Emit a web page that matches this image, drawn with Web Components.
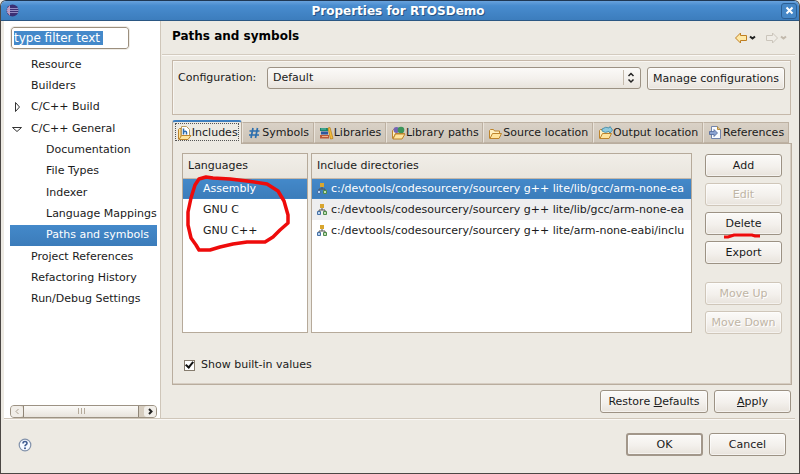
<!DOCTYPE html>
<html lang="en">
<head>
<meta charset="utf-8">
<title>Properties for RTOSDemo</title>
<style>
  html, body { margin: 0; min-height: 100%; }
  body {
    --face: #edeae3;
    --line: #c5b8a9;
    --edge: #9c9284;
    --dim: #bfb5a5;
    --blue: linear-gradient(#4489ca, #3b7cba);
    font: 11px/14px "DejaVu Sans", sans-serif;
    color: #1a1a1a;
    background: var(--face);
  }
</style>
</head>
<body>

<properties-dialog heading="Properties for RTOSDemo">
  <settings-nav slot="nav">
    <tree-item>Resource</tree-item>
    <tree-item>Builders</tree-item>
    <tree-item state="closed">C/C++ Build</tree-item>
    <tree-item state="open">C/C++ General</tree-item>
    <tree-item nested>Documentation</tree-item>
    <tree-item nested>File Types</tree-item>
    <tree-item nested>Indexer</tree-item>
    <tree-item nested>Language Mappings</tree-item>
    <tree-item nested selected>Paths and symbols</tree-item>
    <tree-item>Project References</tree-item>
    <tree-item>Refactoring History</tree-item>
    <tree-item>Run/Debug Settings</tree-item>
  </settings-nav>

  <page-header>Paths and symbols</page-header>
  <config-picker></config-picker>
  <tab-strip>
    <tab-item icon="includes" selected>Includes</tab-item>
    <tab-item icon="symbols">Symbols</tab-item>
    <tab-item icon="libraries">Libraries</tab-item>
    <tab-item icon="libpaths">Library paths</tab-item>
    <tab-item icon="source">Source location</tab-item>
    <tab-item icon="output">Output location</tab-item>
    <tab-item icon="references">References</tab-item>
  </tab-strip>
  <includes-panel>
    <push-button slot="actions">Add</push-button>
    <push-button slot="actions" disabled>Edit</push-button>
    <push-button slot="actions" marked>Delete</push-button>
    <push-button slot="actions" last>Export</push-button>
    <push-button slot="actions" disabled>Move Up</push-button>
    <push-button slot="actions" disabled>Move Down</push-button>
  </includes-panel>

  <push-button slot="page-actions" wide>Restore <u>D</u>efaults</push-button>
  <push-button slot="page-actions"><u>A</u>pply</push-button>
  <push-button slot="footer" primary>OK</push-button>
  <push-button slot="footer">Cancel</push-button>
</properties-dialog>

<script>
const FOLDER = `
  <path d="M1.500 13.500v-8l1-1h3l1 1.500h5v2" fill="#fff0bf" stroke="#bd842c"/>
  <path d="M2 13.500 4.500 8.500h9l-2.500 5z" fill="#ffe49c" stroke="#bd842c"/>`;

const ICONS = {
  includes: `
    <path d="M1.500 14V4.500l1-1H4V14z" fill="#ffe49c" stroke="#bd842c"/>
    <path d="M4.500 1.500h5l3 3v6h-8z" fill="#fff" stroke="#b99b60"/>
    <path d="M6.500 3.500v6M6.500 7q3-1.500 3 .500v2" fill="none" stroke="#2d6bad" stroke-width="1.500"/>
    <path d="M2 14.500 4.500 10.500h9.500l-3 4z" fill="#ffe49c" stroke="#bd842c"/>`,
  symbols: `<path d="M6 3 4 13M10.500 3l-2 10M2.500 6h10M2 10h10" stroke="#2d6fae" stroke-width="1.700"/>`,
  libraries: `
    <path d="M1 3h8v3H1z" fill="#19866f"/><path d="M2 4h5" stroke="#69c0aa"/>
    <path d="M2 6.500h7v3H2z" fill="#2f579f"/>
    <path d="M1 10h9v3.500H1z" fill="#bd5937"/><path d="M3 11.500h6" stroke="#efb48c"/>
    <path d="m9 3 2-.500 3 11-2.500.500z" fill="#f4bd3b" stroke="#b67b17" stroke-width=".7"/>`,
  libpaths: FOLDER + `
    <circle cx="5.500" cy="5" r="3" fill="#7565b5"/>
    <circle cx="10" cy="5" r="3.300" fill="#3d955b"/>
    <path d="M2 14 4.500 9h9.500l-3 5z" fill="#ffe49c" stroke="#bd842c"/>`,
  source: FOLDER,
  output: FOLDER + `
    <path d="M4 4q4-3 7-1l1-1.500L14.500 5 12 8l-1-1.500q-4 2-7-.500z" fill="#8fc9dc" stroke="#3b84a2" stroke-width=".8"/>`,
  references: `
    <path d="M3.500 1.500h6l3 3v9h-9z" fill="#f9fbff" stroke="#7184ad"/>
    <path d="M9.500 1.500v3h3" fill="#f0c56c" stroke="#b68c3d"/>
    <path d="M1.500 6.500H6V4.500L9.500 8 6 11.500v-2H1.500z" fill="#8ba3d2" stroke="#4c6699" stroke-width=".8"/>`,
};

/**
 * Attaches an open shadow root with the given markup.
 * @param {HTMLElement} host
 * @param {string} html
 * @returns {ShadowRoot}
 */
function render(host, html) {
  const template = document.createElement("template");
  template.innerHTML = `<style>:host, * { box-sizing: border-box; }</style>${html}`;
  const root = host.attachShadow({ mode: "open" });
  root.append(template.content.cloneNode(true));
  return root;
}

/** Push button, optionally disabled, default or underlined in red. */
class PushButton extends HTMLElement {
  connectedCallback() {
    if (this.shadowRoot) return;
    render(this, `
      <style>
        :host { display: block; position: relative; min-width: 77px; }
        :host([wide]) { min-width: 108px; }
        :host([last]) { margin-bottom: 12px; }
        button {
          display: block; width: 100%; height: 23px; padding: 0 4px;
          border: 1px solid var(--edge); border-radius: 3px;
          background: linear-gradient(#fbfaf8, #f3f0ec 55%, #e8e3dc);
          box-shadow: inset 0 0 0 1px #fff8;
          font: inherit; color: inherit; white-space: nowrap;
        }
        button:disabled { border-color: #cfc6b9; color: var(--dim); text-shadow: 1px 1px #fff; }
        :host([primary]) button { border: 2px solid #a2978a; }
        svg { position: absolute; left: 18px; top: 21px; }
      </style>
      <button type="button" ${this.hasAttribute("disabled") ? "disabled" : ""}><slot></slot></button>
      ${this.hasAttribute("marked") ? `
        <svg width="40" height="6" fill="none" stroke="#ee0b0b" stroke-width="3">
          <path d="M1 4h4l6-2h18l3 1h5"/>
        </svg>` : ""}
    `);
  }
}

/** One row of the navigation tree. */
class TreeItem extends HTMLElement {
  connectedCallback() {
    if (this.shadowRoot) return;
    const arrows = {
      open: `<path d="M1.500 4.500h9L6 8.500z"/>`,
      closed: `<path d="M4.500 1.500v9L8.500 6z"/>`,
    };
    render(this, `
      <style>
        :host { display: flex; align-items: center; padding-left: 1px; white-space: nowrap; }
        :host([nested]) { padding-left: 16px; }
        :host([selected]) { background: var(--blue); color: #fff; }
        svg { flex: none; width: 12px; height: 12px; margin-right: 8px; fill: #fff; stroke: #333; }
      </style>
      <svg viewBox="0 0 12 12">${arrows[this.getAttribute("state")] ?? ""}</svg><slot></slot>
    `);
    this.setAttribute("role", "treeitem");
  }
}

/** Left pane: filter box, tree and its horizontal scrollbar. */
class SettingsNav extends HTMLElement {
  connectedCallback() {
    if (this.shadowRoot) return;
    render(this, `
      <style>
        :host {
          display: flex; flex-direction: column; background: #fff;
          padding: 6px 3px 0 6px; border-right: 1px solid #cfc6b9;
        }
        input {
          width: 118px; height: 22px; margin: 0 0 5px 1px; padding: 0 2px;
          border: 1px solid #9c8f7e; border-radius: 3px; outline: 1px solid #efece6;
          font: inherit; font-size: 12px; color: #fff;
          background: linear-gradient(#4489ca, #4489ca) 2px 3px / 89px 14px no-repeat, #fff;
        }
        .tree { display: grid; grid-auto-rows: 1fr; height: 256px; }
        .bar {
          display: flex; height: 13px; margin-top: auto;
          border: 1px solid var(--edge); border-radius: 4px; background: #d6cdc0;
        }
        .bar button {
          width: 12px; padding: 0; border: 0; background: #f1eee9;
          border-radius: 3px; display: grid; place-items: center;
        }
        .bar svg { width: 8px; height: 9px; fill: none; stroke: #222; stroke-width: 2; }
        .bar button:disabled svg { stroke: #aaa091; stroke-width: 1; }
        .thumb {
          flex: 1; margin-right: 5px; border: solid #8f8577; border-width: 0 1px;
          background: linear-gradient(#fbfaf8, #e8e3dc); display: grid; place-items: center;
        }
        .bar .thumb svg { stroke: #b5aa9b; stroke-width: 1; }
      </style>
      <input type="text" value="type filter text" aria-label="Filter">
      <div class="tree" role="tree"><slot></slot></div>
      <div class="bar">
        <button type="button" disabled aria-label="Scroll left"><svg viewBox="0 0 8 9"><path d="M5.500 2 3 4.500 5.500 7"/></svg></button>
        <div class="thumb"><svg viewBox="0 0 8 9"><path d="M1.500 1v6M4.500 1v6M7.500 1v6"/></svg></div>
        <button type="button" aria-label="Scroll right"><svg viewBox="0 0 8 9"><path d="M3 2l2.500 2.500L3 7"/></svg></button>
      </div>
    `);
  }
}

/** Page title with the back and forward history buttons. */
class PageHeader extends HTMLElement {
  connectedCallback() {
    if (this.shadowRoot) return;
    render(this, `
      <style>
        :host {
          display: flex; justify-content: space-between; align-items: center;
          height: 34px; padding: 0 7px 4px 10px; margin-right: 4px;
          border-bottom: 1px solid #d3cbbf; box-shadow: 0 1px #faf8f5;
        }
        h1 { margin: 0; font-size: 12px; line-height: 16px; color: #000; }
        nav { display: flex; gap: 8px; padding-top: 4px; }
        button { padding: 0; border: 0; background: none; display: block; }
        svg { display: block; }
      </style>
      <h1><slot></slot></h1>
      <nav>
        <button type="button" aria-label="Back">
          <svg width="23" height="14">
            <path d="M1.500 7 6.500 2v2.500h6v5h-6V12z" fill="#ffe9a6" stroke="#bf7f22"/>
            <path d="m16 5.500 2.500 2 2.500-2" fill="none" stroke="#222" stroke-width="2"/>
          </svg>
        </button>
        <button type="button" disabled aria-label="Forward">
          <svg width="23" height="14">
            <path d="M12.500 7 7.500 2v2.500h-6v5h6V12z" fill="#efece6" stroke="#cbc5bb"/>
            <path d="m16 5.500 2.500 2 2.500-2" fill="none" stroke="#c2b9ac" stroke-width="2"/>
          </svg>
        </button>
      </nav>
    `);
  }
}

/** Build configuration drop-down. */
class ConfigPicker extends HTMLElement {
  connectedCallback() {
    if (this.shadowRoot) return;
    render(this, `
      <style>
        :host {
          display: flex; align-items: flex-start; height: 55px; margin: 5px 8px 0 10px;
          padding: 6px 5px; border: 1px solid var(--line); box-shadow: inset 1px 1px #f8f6f2;
        }
        label { width: 89px; line-height: 22px; }
        .select { position: relative; flex: 1; margin-right: 6px; }
        select {
          appearance: none; display: block; width: 100%; height: 22px; padding: 0 5px;
          border: 1px solid var(--edge); border-radius: 3px;
          background: linear-gradient(#fbfaf8, #f3f0ec 55%, #e8e3dc);
          font: inherit; color: inherit;
        }
        svg { position: absolute; right: 2px; top: 3px; fill: none; pointer-events: none; }
        push-button { min-width: 138px; }
      </style>
      <label for="config">Configuration:</label>
      <div class="select">
        <select id="config"><option>Default</option></select>
        <svg width="16" height="16">
          <path d="M.500 0v15" stroke="#c4baad"/>
          <path d="m5.500 6 2.500-2.500L10.500 6M5.500 9.500 8 12l2.500-2.500" stroke="#222" stroke-width="1.500"/>
        </svg>
      </div>
      <push-button>Manage configurations</push-button>
    `);
  }
}

/** Single tab; the selected one is raised and has the focus ring. */
class TabItem extends HTMLElement {
  connectedCallback() {
    if (this.shadowRoot) return;
    render(this, `
      <style>
        :host { display: block; flex: 1 1 auto; height: 21px; margin-top: 2px; }
        button {
          display: flex; align-items: center; justify-content: center;
          width: 100%; height: 100%; padding: 0 2px;
          border: 1px solid #bdb1a2; border-left-color: #eae4db;
          background: linear-gradient(#d9d1c6, #cdc4b7);
          font: inherit; color: inherit; white-space: nowrap;
        }
        svg { flex: none; width: 15px; height: 16px; fill: none; }
        :host([selected]) { height: 24px; margin: 0 0 -1px; position: relative; }
        :host([selected]) button {
          border: 1px solid #b5a999; border-top: 2px solid #3f80c0; border-bottom: 0;
          border-radius: 3px 3px 0 0; background: var(--face);
          outline: 1px dotted #555; outline-offset: -4px;
        }
      </style>
      <button type="button" role="tab" aria-selected="${this.hasAttribute("selected")}">
        <svg viewBox="0 0 15 16">${ICONS[this.getAttribute("icon")]}</svg><slot></slot>
      </button>
    `);
  }
}

/** Row of tabs. */
class TabStrip extends HTMLElement {
  connectedCallback() {
    if (this.shadowRoot) return;
    render(this, `
      <style>
        :host { display: block; margin: 5px 10px 0 10px; }
        div { display: flex; }
      </style>
      <div role="tablist"><slot></slot></div>
    `);
  }
}

/** Table with one column and an optional icon in front of each row. */
class ListTable extends HTMLElement {
  connectedCallback() {
    if (this.shadowRoot) return;
    const rows = this.getAttribute("rows").split("|");
    const icon = this.hasAttribute("icons") ? `
      <svg width="10" height="12" viewBox="0 0 10 12">
        <path d="M5 4v3M2 9V7h6v2" fill="none" stroke="#555"/>
        <path d="M3 1h4v4H3z" fill="#d9a62e"/>
        <path d="M.500 8.500h3v3h-3z" fill="#b9d4f0" stroke="#4670a5"/>
        <path d="M6.500 8.500h3v3h-3z" fill="#bfe0b0" stroke="#4f8a4b"/>
      </svg>` : "";
    render(this, `
      <style>
        :host { display: block; height: 180px; background: #fff; border: 1px solid #b6aa9a; }
        table { width: 100%; table-layout: fixed; border-collapse: collapse; }
        th {
          height: 24px; padding: 0 5px; text-align: left; font-weight: normal;
          background: linear-gradient(#f1eee8, #e9e5dd); border-bottom: 1px solid var(--line);
        }
        td { height: 21px; padding: 0 0 0 20px; white-space: nowrap; }
        :host([icons]) td { padding-left: 5px; }
        td svg { margin-right: 4px; vertical-align: -2px; }
        tr.selected td { background: var(--blue); color: #fff; }
        :host([icons]) tr:nth-child(2) td { background: #eeeeef; }
      </style>
      <table>
        <thead><tr><th scope="col">${this.getAttribute("heading")}</th></tr></thead>
        <tbody>${rows.map((row, i) => `<tr class="${i ? "" : "selected"}"><td>${icon}${row}</td></tr>`).join("")}</tbody>
      </table>
    `);
  }
}

/** Content of the Includes tab. */
class IncludesPanel extends HTMLElement {
  connectedCallback() {
    if (this.shadowRoot) return;
    render(this, `
      <style>
        :host {
          display: flex; flex-direction: column; flex: 1; margin: 0 7px 0 10px;
          padding: 9px 9px 12px; border: 1px solid #b9ad9e; box-shadow: inset -1px -1px #d6cdc2;
        }
        .lists { display: flex; align-items: flex-start; gap: 3px; }
        .languages { position: relative; width: 126px; }
        .languages svg { position: absolute; left: 0; top: 16px; }
        .dirs { flex: 1; min-width: 0; }
        .actions { display: flex; flex-direction: column; gap: 6px; margin: 1px 0 0 10px; }
        label { display: flex; align-items: center; gap: 6px; margin-top: auto; padding-left: 2px; }
        input {
          appearance: none; width: 11px; height: 11px; margin: 0;
          border: 1px solid #867c6e; background: #fff; display: grid; place-items: center;
        }
        input::before {
          content: ""; width: 3px; height: 6px; margin-top: -2px; transform: rotate(40deg);
          border: solid #111; border-width: 0 2px 2px 0;
        }
      </style>
      <div class="lists">
        <div class="languages">
          <list-table heading="Languages" rows="Assembly|GNU C|GNU C++"></list-table>
          <svg width="112" height="86" fill="none" stroke="#ee0b0b" stroke-width="3.500" stroke-linejoin="round">
            <path d="M24 8 31 9 48 10 65 12 85 15 96 22 102 32 106 46 106 54 98 61 91 68 83 73 65 73 51 75 38 78 28 81 17 81 14 76 9 69 6 56 6 43 9 29 13 16 17 10z"/>
          </svg>
        </div>
        <list-table class="dirs" icons heading="Include directories"
          rows="c:/devtools/codesourcery/sourcery g++ lite/lib/gcc/arm-none-ea|c:/devtools/codesourcery/sourcery g++ lite/lib/gcc/arm-none-ea|c:/devtools/codesourcery/sourcery g++ lite/arm-none-eabi/inclu"></list-table>
        <div class="actions"><slot name="actions"></slot></div>
      </div>
      <label for="builtin"><input id="builtin" type="checkbox" checked>Show built-in values</label>
    `);
  }
}

/** Dialog window: title bar, navigation, page area and footer. */
class PropertiesDialog extends HTMLElement {
  connectedCallback() {
    if (this.shadowRoot) return;
    render(this, `
      <style>
        :host {
          display: flex; flex-direction: column; min-height: 100vh;
          background: var(--face); border: 1px solid #4b4744; border-top-color: #1f3753;
          border-radius: 6px 6px 0 0;
        }
        header {
          display: flex; align-items: center; height: 20px; padding: 0 2px 0 5px;
          background: linear-gradient(#68a2dd, #488ccf 25%, #3c7dbd);
          border-bottom: 1px solid #2b5783; border-radius: 5px 5px 0 0;
          font: bold 12px/16px "DejaVu Sans", sans-serif; color: #fff; text-shadow: 1px 1px #285583;
        }
        header svg { display: block; }
        header span { flex: 1; text-align: center; margin-right: 4px; }
        header button {
          width: 16px; height: 16px; padding: 0; border: 1px solid #2c5f94;
          border-radius: 3px; background: #4587c7; display: grid; place-items: center;
        }
        .body { flex: 1; display: grid; grid-template-columns: 157px 1fr; margin-left: 3px; }
        main { display: flex; flex-direction: column; min-width: 0; margin-left: 1px; }
        .page-actions { display: flex; justify-content: flex-end; gap: 6px; padding: 5px 8px 5px; }
        footer {
          display: flex; align-items: center; gap: 6px; height: 55px; margin: 0 4px 0 3px;
          padding: 0 9px 3px 14px; border-top: 1px solid #cfc6b9; box-shadow: inset 0 1px #faf8f5;
        }
        .help { margin-right: auto; padding: 0; border: 0; background: none; }
        .help svg { display: block; }
      </style>
      <header>
        <svg width="13" height="13" viewBox="0 0 13 13">
          <circle cx="6.500" cy="6.500" r="6" fill="#3b2f74"/>
          <path d="M4 1q-6 5.500 0 11" fill="#c79ab6"/>
          <path d="M1 4.500h11M.500 6.500h12M1 8.500h11" stroke="#a9a3d6" stroke-width=".8"/>
        </svg>
        <span>${this.getAttribute("heading")}</span>
        <button type="button" aria-label="Close">
          <svg width="9" height="9"><path d="m1.500 1.500 6 6m0-6-6 6" stroke="#fff" stroke-width="2"/></svg>
        </button>
      </header>
      <div class="body">
        <slot name="nav"></slot>
        <main>
          <slot></slot>
          <div class="page-actions"><slot name="page-actions"></slot></div>
        </main>
      </div>
      <footer>
        <button class="help" type="button" aria-label="Help">
          <svg width="14" height="14" viewBox="0 0 14 14" fill="none">
            <circle cx="7" cy="7" r="5.800" fill="#f5f9ff" stroke="#8292ab" stroke-width="1.200"/>
            <path d="M5 5.500q0-2 2-2t2 1.700q0 1-1 1.500-1 .500-1 1.600" stroke="#3f5c91" stroke-width="1.600"/>
            <circle cx="7" cy="10.200" r="1" fill="#3f5c91"/>
          </svg>
        </button>
        <slot name="footer"></slot>
      </footer>
    `);
  }
}

customElements.define("push-button", PushButton);
customElements.define("tree-item", TreeItem);
customElements.define("settings-nav", SettingsNav);
customElements.define("page-header", PageHeader);
customElements.define("config-picker", ConfigPicker);
customElements.define("tab-item", TabItem);
customElements.define("tab-strip", TabStrip);
customElements.define("list-table", ListTable);
customElements.define("includes-panel", IncludesPanel);
customElements.define("properties-dialog", PropertiesDialog);
</script>
</body>
</html>
